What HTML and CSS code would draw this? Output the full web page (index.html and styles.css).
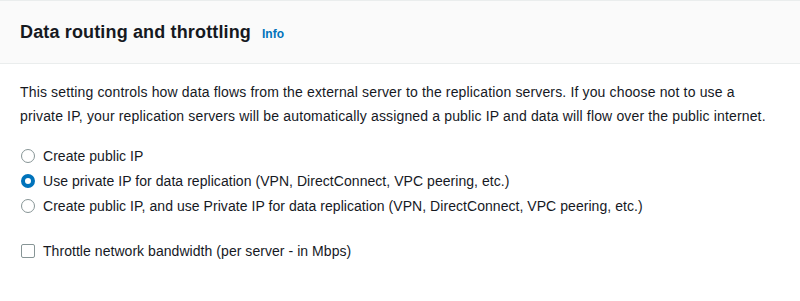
FILE: index.html
```html
<!DOCTYPE html>
<html lang="en">
<head>
    <meta charset="UTF-8">
    <title>Data routing and throttling</title>
    <link rel="stylesheet" href="styles.css">
</head>
<body>
    <div class="panel">
        <div class="panel-header">
            <h2>Data routing and throttling</h2>
            <a class="info-link" href="#">Info</a>
        </div>
        <div class="panel-body">
            <p class="desc">This setting controls how data flows from the external server to the replication servers. If you choose not to use a private IP, your replication servers will be automatically assigned a public IP and data will flow over the public internet.</p>

            <div class="radio-group">
                <label class="option">
                    <span class="radio"></span>
                    <span>Create public IP</span>
                </label>
                <label class="option">
                    <span class="radio checked"></span>
                    <span>Use private IP for data replication (VPN, DirectConnect, VPC peering, etc.)</span>
                </label>
                <label class="option">
                    <span class="radio"></span>
                    <span>Create public IP, and use Private IP for data replication (VPN, DirectConnect, VPC peering, etc.)</span>
                </label>
            </div>

            <label class="option">
                <span class="checkbox"></span>
                <span>Throttle network bandwidth (per server - in Mbps)</span>
            </label>
        </div>
    </div>
</body>
</html>
```

FILE: styles.css
```css
* {
    margin: 0;
    padding: 0;
    box-sizing: border-box;
}

body {
    font-family: "Liberation Sans", Arial, sans-serif;
    font-size: 14px;
    color: #16191f;
    background: #fff;
}

.panel {
    border-top: 1px solid #eaeded;
}

.panel-header {
    display: flex;
    align-items: baseline;
    gap: 11px;
    height: 63px;
    padding: 19px 20px 0;
    background-color: #fafafa;
    border-bottom: 1px solid #eaeded;
}

.panel-header h2 {
    font-size: 18px;
    font-weight: bold;
    line-height: 24px;
    letter-spacing: 0.15px;
}

.info-link {
    font-size: 12px;
    font-weight: bold;
    color: #0073bb;
    text-decoration: none;
}

.panel-body {
    padding: 16px 20px 20px;
}

.desc {
    max-width: 748px;
    line-height: 24px;
    letter-spacing: 0.15px;
    margin-bottom: 18px;
}

.radio-group {
    display: flex;
    flex-direction: column;
    gap: 5px;
    margin-bottom: 25px;
}

.option {
    display: flex;
    align-items: center;
    gap: 8px;
    line-height: 20px;
    letter-spacing: 0.05px;
}

.radio {
    width: 14px;
    height: 14px;
    margin-left: 1px;
    border: 1px solid #879596;
    border-radius: 50%;
    flex-shrink: 0;
}

.radio.checked {
    border: 4px solid #0073bb;
}

.checkbox {
    width: 14px;
    height: 14px;
    margin-left: 1px;
    border: 1px solid #879596;
    border-radius: 2px;
    flex-shrink: 0;
}
```
